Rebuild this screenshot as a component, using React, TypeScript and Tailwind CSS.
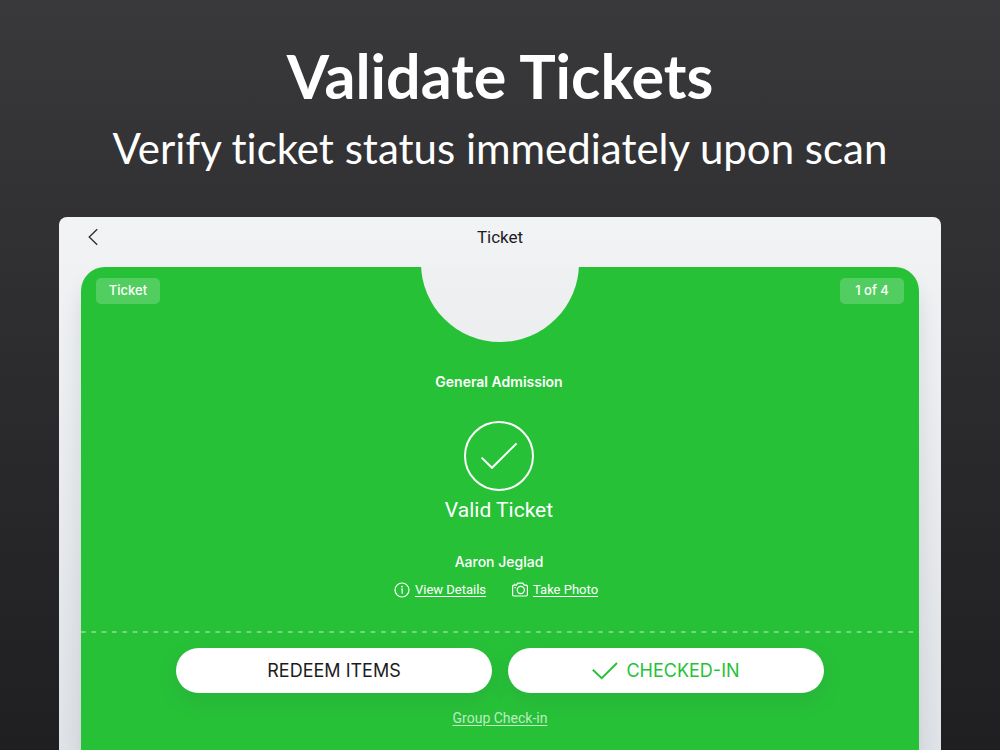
import type { ReactNode } from 'react'

type IconProps = {
    className?: string
}

const BackIcon = ({ className }: IconProps) => (
    <svg viewBox="0 0 10 18" fill="none" stroke="currentColor" className={className} aria-hidden="true">
        <path d="M9.2 1.2 1.2 9l8 7.8" strokeWidth="1.3" />
    </svg>
)

const ValidIcon = ({ className }: IconProps) => (
    <svg viewBox="0 0 70 70" fill="none" stroke="currentColor" className={className} aria-hidden="true">
        <circle cx="35" cy="35" r="34" strokeWidth="2" />
        <path d="m17.6 36.6 10.4 10.2 24.6-24.4" strokeWidth="2" />
    </svg>
)

const CheckIcon = ({ className }: IconProps) => (
    <svg viewBox="0 0 26 18" fill="none" stroke="currentColor" className={className} aria-hidden="true">
        <path d="m0.8 7.8 8.9 8.4L25 1" strokeWidth="2" />
    </svg>
)

const InfoIcon = ({ className }: IconProps) => (
    <svg viewBox="0 0 16 16" fill="none" stroke="currentColor" className={className} aria-hidden="true">
        <circle cx="8" cy="8" r="7" strokeWidth="1.2" />
        <path d="M7 7h1.2v4.8" strokeWidth="1.2" />
        <circle cx="8" cy="4.6" r="0.9" fill="currentColor" stroke="none" />
    </svg>
)

const CameraIcon = ({ className }: IconProps) => (
    <svg viewBox="0 0 16 16" fill="none" stroke="currentColor" strokeWidth="1.2" className={className} aria-hidden="true">
        <path d="M1.8 3.2h2.6l1.4-2h5l1.4 2h2q1.2 0 1.2 1.2v8.4q0 1.2-1.2 1.2H1.8Q.6 14 .6 12.8V4.4q0-1.2 1.2-1.2Z" />
        <circle cx="8.8" cy="8" r="3.6" />
        <path d="M2.4 5.6h1.4" />
        <path d="M1.8 2.2h1.6" strokeWidth="0.8" />
    </svg>
)

const Chip = ({ children }: { children: ReactNode }) => (
    <span className="flex h-[26px] w-16 items-center justify-center rounded-[5px] bg-white/20 text-[13px] font-medium">
        {children}
    </span>
)

const TicketCard = () => {
    return (
        <section className="relative flex flex-1 flex-col items-center rounded-t-3xl bg-[#27c138] pb-6 text-white shadow-[0_16px_20px_rgba(60,80,90,0.14)]">
            {/* punched hole at the top edge */}
            <div className="absolute top-0 left-1/2 flex h-[75px] w-40 -translate-x-1/2 flex-col items-center justify-end overflow-hidden">
                <div className="size-[158px] shrink-0 rounded-full bg-linear-to-b from-[#f1f2f4] to-[#eceef0]" />
            </div>

            <div className="flex w-full justify-between px-[15px] pt-[11px]">
                <Chip>Ticket</Chip>
                <Chip>1 of 4</Chip>
            </div>

            <div className="mt-[68px] flex flex-col items-center pr-[2px]">
                <h3 className="text-[14px] leading-5 font-semibold">General Admission</h3>
                <ValidIcon className="mt-[29px] size-[70px]" />
                <p className="mt-[5px] font-[Roboto,sans-serif] text-[21px] leading-7">Valid Ticket</p>

                <p className="mt-7 text-[14px] leading-5 font-medium">Aaron Jeglad</p>
                <div className="mt-2 flex gap-[26px] pr-[6px] font-[Roboto,sans-serif] text-[13px] leading-5">
                    <a href="#details" className="flex items-center gap-[5px]">
                        <InfoIcon className="size-4" />
                        <span className="underline underline-offset-2">View Details</span>
                    </a>
                    <a href="#photo" className="flex items-center gap-[5px]">
                        <CameraIcon className="size-4" />
                        <span className="underline underline-offset-2">Take Photo</span>
                    </a>
                </div>
            </div>

            <div className="mt-[31px] h-[2px] w-full bg-[linear-gradient(to_right,rgba(255,255,255,0.35)_45%,transparent_45%)] bg-[length:calc(100%/81)_2px]" />

            <div className="mt-[15px] grid w-full max-w-[680px] grid-cols-2 gap-4 px-4 text-[18px]">
                <button
                    type="button"
                    className="flex h-[45px] items-center justify-center rounded-full bg-white text-[#1c1c1e] shadow-[0_8px_20px_rgba(60,90,80,0.14)]"
                >
                    REDEEM ITEMS
                </button>
                <button
                    type="button"
                    className="flex h-[45px] items-center justify-center gap-2 rounded-full bg-white text-[#27c138] shadow-[0_8px_20px_rgba(60,90,80,0.14)]"
                >
                    <CheckIcon className="h-[18px] w-[26px]" />
                    CHECKED-IN
                </button>
            </div>

            <a
                href="#group"
                className="mt-[15px] font-[Roboto,sans-serif] text-[14px] leading-5 text-white/70 underline underline-offset-2"
            >
                Group Check-in
            </a>
        </section>
    )
}

const App = () => {
    return (
        <div className="flex min-h-screen flex-col bg-linear-to-b from-[#39393b] to-[#1f1e20] px-[59px] font-[Inter,'Liberation_Sans',sans-serif]">
            <header className="pt-10 pb-10 text-center font-[Lato,'Open_Sans',sans-serif] text-white [font-variant-ligatures:none]">
                <h1 className="text-[61px] leading-[72px] font-bold">Validate Tickets</h1>
                <p className="mt-2 pb-px text-[42px] leading-[56px]">Verify ticket status immediately upon scan</p>
            </header>

            <main className="flex flex-1 flex-col rounded-t-lg bg-linear-to-b from-[#f2f3f5] to-[#dfe2e6] px-[22px]">
                <div className="grid h-[50px] grid-cols-[40px_1fr_40px] items-start pt-[10px]">
                    <button type="button" aria-label="Back" className="flex h-5 items-center pl-[7px] text-[#2a2a2c]">
                        <BackIcon className="h-[18px] w-[10px]" />
                    </button>
                    <h2 className="text-center font-[Roboto,sans-serif] text-[17px] leading-5 text-[#1c1c1e]">Ticket</h2>
                </div>
                <TicketCard />
            </main>
        </div>
    )
}

export default App
